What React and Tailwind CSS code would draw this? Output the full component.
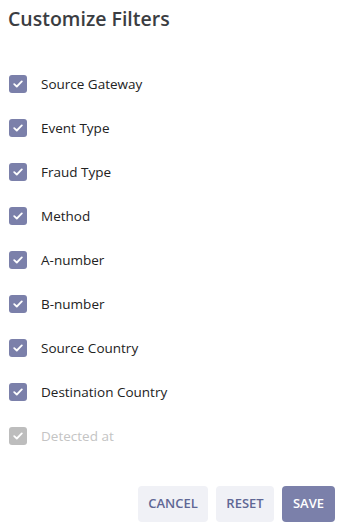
import React, { useState } from 'react';

const filters = [
  { label: 'Source Gateway', checked: true },
  { label: 'Event Type', checked: true },
  { label: 'Fraud Type', checked: true },
  { label: 'Method', checked: true },
  { label: 'A-number', checked: true },
  { label: 'B-number', checked: true },
  { label: 'Source Country', checked: true },
  { label: 'Destination Country', checked: true },
  { label: 'Detected at', checked: true, disabled: true },
];

const CheckIcon = () => (
  <svg width="10" height="8" viewBox="0 0 10 8" fill="none">
    <path d="M1.2 4.1 3.8 6.5 8.8 1.4" stroke="white" strokeWidth="1.8" strokeLinecap="round" strokeLinejoin="round" />
  </svg>
);

const FilterRow = ({ label, checked, disabled, onToggle }) => (
  <label className="flex h-[44px] items-center cursor-pointer">
    <span
      onClick={disabled ? undefined : onToggle}
      className={`ml-[9px] flex h-[18px] w-[18px] items-center justify-center rounded-[3px] ${
        disabled ? 'bg-[#bdbdbd]' : checked ? 'bg-[#7b80aa]' : 'border-2 border-[#7b80aa] bg-white'
      }`}
    >
      {checked && <CheckIcon />}
    </span>
    <span className={`ml-[14px] text-[13.5px] ${disabled ? 'text-[#c4c4c4]' : 'text-[#222222]'}`}>{label}</span>
  </label>
);

const App = () => {
  const [items, setItems] = useState(filters);

  const toggle = (i) =>
    setItems((prev) => prev.map((it, idx) => (idx === i ? { ...it, checked: !it.checked } : it)));

  return (
    <div className="w-[347px] h-[528px] bg-white" style={{ fontFamily: '"Open Sans", "Noto Sans", sans-serif' }}>
      <h2 className="pl-[8px] pt-[5px] text-[19.5px] leading-[28px] font-semibold text-[#3b3d42]">Customize Filters</h2>

      <div className="mt-[29px]">
        {items.map((it, i) => (
          <FilterRow key={it.label} {...it} onToggle={() => toggle(i)} />
        ))}
      </div>

      <div className="mt-[28px] flex justify-end gap-2 pr-[12px]">
        <button className="h-9 w-[70px] rounded-[4px] bg-[#f0f1f6] text-[13px] font-semibold text-[#5f6795]">CANCEL</button>
        <button className="h-9 w-[58px] rounded-[4px] bg-[#f0f1f6] text-[13px] font-semibold text-[#5f6795]">RESET</button>
        <button className="h-9 w-[53px] rounded-[4px] bg-[#7b80aa] text-[13px] font-semibold text-white">SAVE</button>
      </div>
    </div>
  );
};

export default App;
